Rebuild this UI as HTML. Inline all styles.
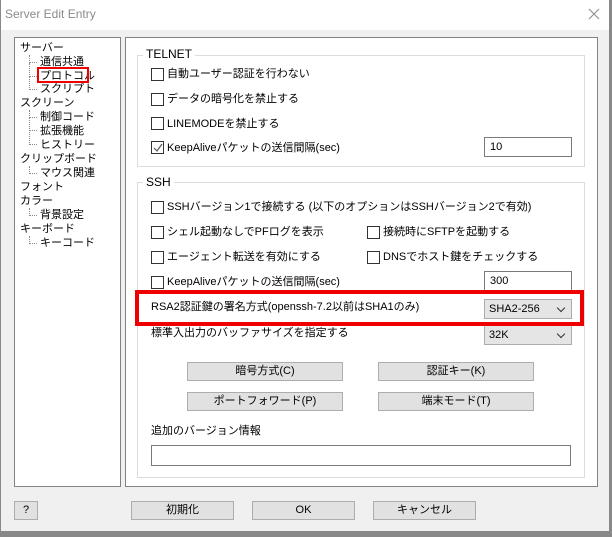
<!DOCTYPE html>
<html><head><meta charset="utf-8"><style>
body{margin:0;width:612px;height:537px;overflow:hidden;background:#f0f0f0;font-family:"Liberation Sans","Noto Sans CJK JP",sans-serif;font-size:11px;color:#000;position:relative}
.a{position:absolute}
.t{position:absolute;white-space:nowrap;line-height:14px}
.cb{position:absolute;width:11px;height:11px;border:1px solid #333;background:#fff}
.ed{position:absolute;background:#fff;border:1px solid #7a7a7a;box-sizing:border-box;padding:2px 5px;line-height:14px}
.btn{position:absolute;background:#e1e1e1;border:1px solid #adadad;box-sizing:border-box;text-align:center;line-height:17px}
.grp{position:absolute;border:1px solid #dcdcdc}
.lg{position:absolute;background:#fff;padding:0 3px;line-height:14px}
.cmb{position:absolute;background:#e5e5e5;border:1px solid #acacac;box-sizing:border-box;padding:1px 4px;line-height:16px}
.cmb:after{content:"";position:absolute;right:7px;top:5px;width:5px;height:5px;border-right:1px solid #333;border-bottom:1px solid #333;transform:rotate(45deg)}
.tr{position:absolute;border-left:1px dotted #888;border-bottom:1px dotted #888;width:7px}
</style></head><body>
<div class="a" style="left:0;top:0;width:612px;height:30px;background:#fff"></div>
<div class="t" style="left:5px;top:7px;color:#8a8a8a;font-size:12px">Server Edit Entry</div>
<svg class="a" style="left:588px;top:8px" width="12" height="12"><path d="M1 1L11 11M11 1L1 11" stroke="#888" stroke-width="1"/></svg>
<div class="a" style="left:0;top:0;width:1px;height:537px;background:#888"></div>
<div class="a" style="left:609px;top:0;width:3px;height:537px;background:#888"></div>
<div class="a" style="left:0;top:531px;width:612px;height:6px;background:#888"></div>

<div class="a" style="left:14px;top:37px;width:107px;height:450px;background:#fff;border:1px solid #828282;box-sizing:border-box"></div>
<div class="t" style="left:20px;top:41px">サーバー</div>
<div class="tr" style="left:29px;top:55px;height:7px"></div>
<div class="t" style="left:40px;top:55px">通信共通</div>
<div class="tr" style="left:29px;top:63px;height:13px"></div>
<div class="t" style="left:40px;top:69px">プロトコル</div>
<div class="a" style="left:37px;top:67px;width:52px;height:16px;border:2px solid #e00;box-sizing:border-box"></div>
<div class="tr" style="left:29px;top:76px;height:13px"></div>
<div class="t" style="left:40px;top:82px">スクリプト</div>
<div class="t" style="left:20px;top:96px">スクリーン</div>
<div class="tr" style="left:29px;top:110px;height:7px"></div>
<div class="t" style="left:40px;top:110px">制御コード</div>
<div class="tr" style="left:29px;top:117px;height:13px"></div>
<div class="t" style="left:40px;top:124px">拡張機能</div>
<div class="tr" style="left:29px;top:130px;height:14px"></div>
<div class="t" style="left:40px;top:138px">ヒストリー</div>
<div class="t" style="left:20px;top:152px">クリップボード</div>
<div class="tr" style="left:29px;top:166px;height:7px"></div>
<div class="t" style="left:40px;top:166px">マウス関連</div>
<div class="t" style="left:20px;top:180px">フォント</div>
<div class="t" style="left:20px;top:194px">カラー</div>
<div class="tr" style="left:29px;top:208px;height:7px"></div>
<div class="t" style="left:40px;top:208px">背景設定</div>
<div class="t" style="left:20px;top:222px">キーボード</div>
<div class="tr" style="left:29px;top:236px;height:7px"></div>
<div class="t" style="left:40px;top:236px">キーコード</div>

<div class="a" style="left:125px;top:37px;width:473px;height:450px;background:#fff;border:1px solid #828282;box-sizing:border-box"></div>
<div class="grp" style="left:137px;top:55px;width:446px;height:110px"></div>
<div class="lg" style="left:143px;top:47px;font-size:12px">TELNET</div>
<div class="cb" style="left:151px;top:68px"></div><div class="t" style="left:167px;top:67px">自動ユーザー認証を行わない</div>
<div class="cb" style="left:151px;top:93px"></div><div class="t" style="left:167px;top:92px">データの暗号化を禁止する</div>
<div class="cb" style="left:151px;top:117px"></div><div class="t" style="left:167px;top:117px">LINEMODEを禁止する</div>
<div class="cb" style="left:151px;top:141px"><svg class="a" style="left:1px;top:1px" width="10" height="10"><path d="M1 5L4 8L9 1" stroke="#555" fill="none" stroke-width="1.2"/></svg></div><div class="t" style="left:167px;top:141px">KeepAliveパケットの送信間隔(sec)</div>
<div class="ed" style="left:484px;top:137px;width:88px;height:20px">10</div>

<div class="grp" style="left:137px;top:182px;width:446px;height:294px"></div>
<div class="lg" style="left:143px;top:175px;font-size:12px">SSH</div>
<div class="cb" style="left:151px;top:201px"></div><div class="t" style="left:167px;top:200px">SSHバージョン1で接続する (以下のオプションはSSHバージョン2で有効)</div>
<div class="cb" style="left:151px;top:226px"></div><div class="t" style="left:167px;top:225px">シェル起動なしでPFログを表示</div>
<div class="cb" style="left:367px;top:226px"></div><div class="t" style="left:383px;top:225px">接続時にSFTPを起動する</div>
<div class="cb" style="left:151px;top:251px"></div><div class="t" style="left:167px;top:250px">エージェント転送を有効にする</div>
<div class="cb" style="left:367px;top:251px"></div><div class="t" style="left:383px;top:250px">DNSでホスト鍵をチェックする</div>
<div class="cb" style="left:151px;top:276px"></div><div class="t" style="left:167px;top:275px">KeepAliveパケットの送信間隔(sec)</div>
<div class="ed" style="left:484px;top:271px;width:88px;height:20px">300</div>
<div class="t" style="left:151px;top:300px">RSA2認証鍵の署名方式(openssh-7.2以前はSHA1のみ)</div>
<div class="cmb" style="left:484px;top:299px;width:88px;height:20px">SHA2-256</div>
<div class="t" style="left:151px;top:326px">標準入出力のバッファサイズを指定する</div>
<div class="cmb" style="left:484px;top:325px;width:88px;height:20px">32K</div>
<div class="a" style="left:135px;top:290px;width:449px;height:36px;border:4px solid #e00;box-sizing:border-box"></div>
<div class="btn" style="left:187px;top:362px;width:156px;height:19px">暗号方式(C)</div>
<div class="btn" style="left:378px;top:362px;width:156px;height:19px">認証キー(K)</div>
<div class="btn" style="left:187px;top:392px;width:156px;height:19px">ポートフォワード(P)</div>
<div class="btn" style="left:378px;top:392px;width:156px;height:19px">端末モード(T)</div>
<div class="t" style="left:151px;top:424px">追加のバージョン情報</div>
<div class="ed" style="left:151px;top:445px;width:420px;height:21px"></div>

<div class="btn" style="left:14px;top:501px;width:24px;height:19px">?</div>
<div class="btn" style="left:131px;top:501px;width:103px;height:19px">初期化</div>
<div class="btn" style="left:252px;top:501px;width:103px;height:19px">OK</div>
<div class="btn" style="left:373px;top:501px;width:103px;height:19px">キャンセル</div>
</body></html>
